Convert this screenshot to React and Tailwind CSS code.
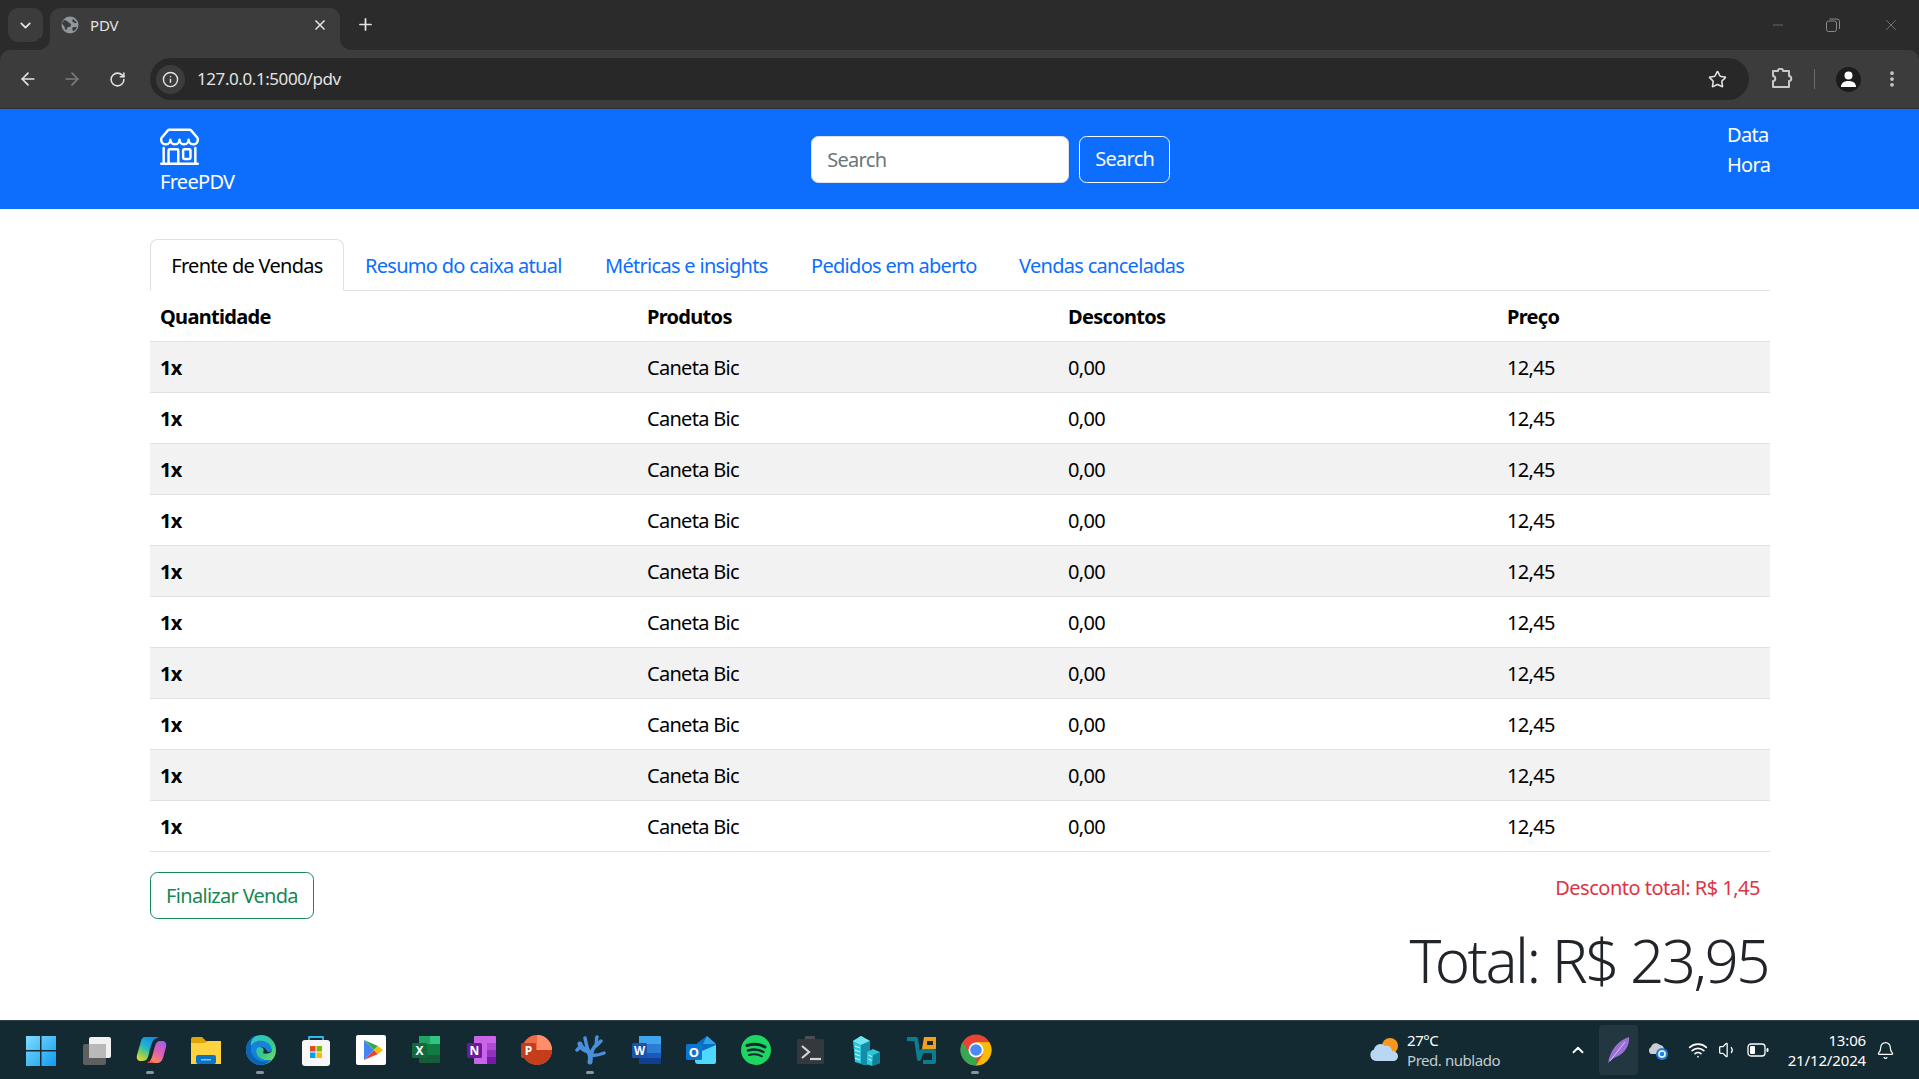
import React from "react";
import { BsShop } from "react-icons/bs";
import { ArrowLeft, ArrowRight, RotateCw, Info, Star, ChevronDown, ChevronUp, X, Plus, Minus, EllipsisVertical, Bell, Wifi, Volume1 } from "lucide-react";

const rows = Array.from({ length: 10 });

const Icon = ({ dot, children }) => (
  <div className="relative flex h-full w-[55px] shrink-0 items-center justify-center">
    <svg width="32" height="32" viewBox="0 0 32 32">{children}</svg>
    {dot && <span className="absolute bottom-[5px] left-[23px] h-[3px] w-[8px] rounded-full bg-[#8b9599]" />}
  </div>
);

function Taskbar() {
  return (
    <footer className="flex h-[59px] shrink-0 items-center border-t border-[#2c3e45] bg-[#132a32] text-white">
      <div className="ml-[13px] flex h-full items-center">
        <Icon>
          <defs><linearGradient id="w" x1="0" y1="0" x2="1" y2="1"><stop offset="0" stopColor="#7fdcff" /><stop offset="1" stopColor="#109bf0" /></linearGradient></defs>
          <path fill="url(#w)" d="M1 2h14v14H1zM16.500 2H31v14H16.500zM1 17.500h14V32H1zM16.500 17.500H31V32H16.500z" />
        </Icon>
        <Icon>
          <rect x="3" y="10" width="23" height="21" rx="2" fill="#5f5f5f" />
          <rect x="9" y="3" width="22" height="21" rx="2" fill="#f1f1f1" />
          <rect x="9" y="10" width="17" height="14" fill="#b9b9b9" />
        </Icon>
        <Icon dot>
          <defs>
            <linearGradient id="c1" x1="0.7" y1="0" x2="0.1" y2="1"><stop offset="0" stopColor="#1686e8" /><stop offset=".45" stopColor="#22b8c8" /><stop offset=".75" stopColor="#8fd14f" /><stop offset="1" stopColor="#f6d33c" /></linearGradient>
            <linearGradient id="c2" x1="0.8" y1="0" x2="0.2" y2="1"><stop offset="0" stopColor="#a35ce8" /><stop offset=".5" stopColor="#e25fb0" /><stop offset=".85" stopColor="#f58a5a" /><stop offset="1" stopColor="#e8483a" /></linearGradient>
          </defs>
          <path fill="url(#c1)" d="M10 3h11c1 0 2 0 3 1-4 0-6 2-7 5l-4 14c-1 3-3 4-6 4H6c-3 0-5-2-4-6L6 7c1-3 2-4 4-4z" />
          <path fill="url(#c2)" d="M12 29h10c3 0 5-2 6-5l3-11c1-4-1-6-4-6h-2c-3 0-4 2-5 5l-3 11c-1 3-3 5-5 6z" />
          <path fill="#132a32" opacity=".35" d="M14 16l3-7 1 9-3 5z" />
        </Icon>
        <Icon>
          <path fill="#e0a30a" d="M1 5a2 2 0 0 1 2-2h9l4 4h14v8H1z" />
          <path fill="#fdd33f" d="M1 9h14l3-2h13v23H1z" />
          <rect x="6" y="21" width="20" height="9" rx="2" fill="#0c74c4" />
          <rect x="11" y="25" width="10" height="1.500" fill="#7fc3f2" />
        </Icon>
        <Icon dot>
          <defs><linearGradient id="e" x1="0" y1="0" x2="1" y2="1"><stop offset="0" stopColor="#2fc1de" /><stop offset=".6" stopColor="#35c98b" /><stop offset="1" stopColor="#8ee05a" /></linearGradient></defs>
          <circle cx="16" cy="16" r="15" fill="url(#e)" />
          <path fill="#0c63b8" d="M1 16C1 7 8 1 16 1c-7 0-11 5-10 11 1 9 10 16 20 14a15 15 0 0 1-10 5C7 31 1 24 1 16z" />
          <path fill="#1483d8" d="M6 12c2-4 7-6 12-5 5 1 8 4 9 9-1 4-6 4-9 3 2-3 0-6-3-6-4 0-5 5-2 9 2 3 7 5 13 4-9 5-22-2-20-14z" />
          <path fill="#132a32" d="M15 13c3 0 5 3 3 6 3 1 8 1 9-3 0 0-1 2-3 2-3 0-3-6-9-5z" />
        </Icon>
        <Icon>
          <path fill="none" stroke="#2bb7f0" strokeWidth="1.800" d="M9 9V3h14v6" />
          <rect x="2" y="6" width="28" height="26" rx="3" fill="#f7f7f7" />
          <path fill="#e8482a" d="M10 12h5.500v5.500H10z" /><path fill="#7fb900" d="M16.500 12H22v5.500h-5.500z" />
          <path fill="#00a2ed" d="M10 18.500h5.500V24H10z" /><path fill="#ffb900" d="M16.500 18.500H22V24h-5.500z" />
        </Icon>
        <Icon>
          <rect x="1" y="1" width="30" height="30" rx="2" fill="#fff" />
          <path fill="#4285f4" d="M9 6v20l10-10z" />
          <path fill="#34a853" d="M9 6l10 10 4-4z" />
          <path fill="#ea4335" d="M9 26l10-10 4 4z" />
          <path fill="#fbbc04" d="M23 12l-4 4 4 4 5-4z" />
        </Icon>
        <Icon>
          <path fill="#21a366" d="M9 2h20a1 1 0 0 1 1 1v7H9z" /><path fill="#33c481" d="M20 2h9a1 1 0 0 1 1 1v7H20z" />
          <rect x="9" y="10" width="21" height="11" fill="#107c41" />
          <path fill="#185c37" d="M9 21h21v7a1 1 0 0 1-1 1H10a1 1 0 0 1-1-1z" />
          <rect x="2" y="9" width="15" height="15" rx="1.500" fill="#0f6b3c" />
          <text x="9.500" y="21" textAnchor="middle" fontFamily="Noto Sans" fontWeight="700" fontSize="12" fill="#fff">X</text>
        </Icon>
        <Icon>
          <rect x="9" y="2" width="22" height="28" rx="1" fill="#ca64ea" />
          <rect x="22" y="9" width="9" height="7" fill="#ae4bd5" /><rect x="22" y="16" width="9" height="7" fill="#9332bf" /><rect x="22" y="23" width="9" height="7" fill="#7719aa" />
          <rect x="2" y="9" width="15" height="15" rx="1.500" fill="#6b1b9a" />
          <text x="9.500" y="21" textAnchor="middle" fontFamily="Noto Sans" fontWeight="700" fontSize="12" fill="#fff">N</text>
        </Icon>
        <Icon>
          <circle cx="17" cy="16" r="15" fill="#ed6c47" />
          <path fill="#ff8f6b" d="M17 1a15 15 0 0 1 15 15H17z" />
          <path fill="#c43e1c" d="M2 16h30a15 15 0 0 1-30 0z" />
          <rect x="1" y="9" width="15" height="15" rx="1.500" fill="#c43e1c" />
          <text x="8.500" y="21" textAnchor="middle" fontFamily="Noto Sans" fontWeight="700" fontSize="12" fill="#fff">P</text>
        </Icon>
        <Icon dot>
          <g fill="none" stroke="#4b8fdc" strokeLinecap="round" strokeLinejoin="round">
            <path strokeWidth="5" d="M15 28c1-5 1-8-2-11-3-1-7-2-8-7" />
            <path strokeWidth="3.500" d="M5 13l-3 3M13 17c-1-4-2-8-3-13M16 21c1-5 3-8 5-10 1-3 0-6 1-8M21 12l5-5M17 21c3 1 7 0 12-2" />
          </g>
        </Icon>
        <Icon>
          <path fill="#41a5ee" d="M9 2h21a1 1 0 0 1 1 1v7H9z" /><rect x="9" y="10" width="22" height="9" fill="#2b7cd3" />
          <rect x="9" y="19" width="22" height="5" fill="#185abd" /><path fill="#103f91" d="M9 24h22v5a1 1 0 0 1-1 1H10a1 1 0 0 1-1-1z" />
          <rect x="2" y="9" width="15" height="15" rx="1.500" fill="#1a52ad" />
          <text x="9.500" y="21" textAnchor="middle" fontFamily="Noto Sans" fontWeight="700" fontSize="11.500" fill="#fff">W</text>
        </Icon>
        <Icon>
          <path fill="#0a6fc4" d="M12 9l10-7 9 8v10H12z" />
          <path fill="#28a8ea" d="M22 2l9 8H18z" />
          <path fill="#50d9ff" d="M10 20l21-9v17a2 2 0 0 1-2 2H13a3 3 0 0 1-3-3z" />
          <rect x="1" y="10" width="16" height="16" rx="1.500" fill="#0b76d0" />
          <text x="9" y="23" textAnchor="middle" fontFamily="Noto Sans" fontWeight="700" fontSize="13" fill="#fff">O</text>
        </Icon>
        <Icon>
          <circle cx="16" cy="16" r="15" fill="#1ed760" />
          <g fill="none" stroke="#132a32" strokeLinecap="round">
            <path strokeWidth="3" d="M7 11.500c6-1.800 13-1.300 18 1.500" />
            <path strokeWidth="2.500" d="M8 16.500c5-1.400 11-1 15.500 1.500" />
            <path strokeWidth="2" d="M9 21c4-1 9-.8 13 1.300" />
          </g>
        </Icon>
        <Icon>
          <rect x="10" y="2" width="10" height="5" rx="1" fill="#4a4f54" />
          <rect x="2" y="5" width="27" height="25" rx="1.500" fill="#33393e" />
          <path fill="none" stroke="#d4d4d4" strokeWidth="2.200" d="M7 12l7 6-7 6" />
          <path stroke="#d4d4d4" strokeWidth="2.200" d="M15 25h11" />
        </Icon>
        <Icon>
          <path fill="#2bc7dc" d="M3 7l8-5 9 5v23l-5 1-10-3z" />
          <path fill="#6fe6f2" d="M3 7l8-5 9 5-9 4z" />
          <path fill="#138ea6" d="M11 11l9-4v23l-5 1-4-1z" />
          <path fill="#2bc7dc" d="M17 18l6-3 7 3v11l-8 3-5-2z" />
          <path fill="#0f8199" d="M23 21l7-3v11l-8 3z" />
          <path stroke="#e7fbff" strokeWidth="1" d="M5 12l5 2M5 16l5 2M5 20l5 2M5 24l5 2M18.500 21l3 1.500M18.500 25l3 1.500" />
        </Icon>
        <Icon>
          <path fill="none" stroke="#0e7c8f" strokeWidth="4" strokeLinejoin="round" d="M2 5h9l3 20 3-8h12v11H18" />
          <path fill="#f0a020" d="M19 3h12v12H17z" />
          <rect x="22" y="7" width="6" height="4" fill="#132a32" />
        </Icon>
        <Icon dot>
          <circle cx="16" cy="16" r="15.500" fill="#ea4335" />
          <path fill="#34a853" d="M16 31.500A15.500 15.500 0 0 1 2.600 8.200L10 20l6 0 1 11.500z" />
          <path fill="#fbbc04" d="M16 31.500A15.500 15.500 0 0 0 29.400 8.200L16 8l7 12z" />
          <circle cx="16" cy="16" r="7.500" fill="#fff" />
          <circle cx="16" cy="16" r="5.800" fill="#4a8af4" />
        </Icon>
      </div>

      <div className="ml-[365px] flex items-center">
        <svg width="32" height="26" viewBox="0 0 32 26">
          <circle cx="22" cy="9" r="8" fill="#f59a1e" />
          <path fill="#b9d6f2" d="M8 24a6 6 0 0 1-2-11.500C7 7 14 5 17 9c3-1 7 1 7 5 3 0 6 2 6 5s-2 5-5 5z" />
        </svg>
        <div className="ml-[7px] w-[130px] whitespace-nowrap text-[15px] leading-[20px] tracking-[-0.03em]">
          <div>27°C</div>
          <div className="text-[#c4cbce]">Pred. nublado</div>
        </div>
      </div>
      <ChevronUp size={18} strokeWidth={2.500} className="ml-[32px]" />
      <div className="ml-[12px] flex h-[50px] w-[39px] items-center justify-center rounded bg-[#22373f]">
        <svg width="24" height="28" viewBox="0 0 24 28">
          <path fill="#9a6fd6" d="M1 27C3 15 10 5 22 1c1 9-5 17-13 20-3 1-5 3-8 6z" />
          <path stroke="#d7c2f4" strokeWidth="1" d="M3 25L18 6" />
        </svg>
      </div>
      <svg width="22" height="20" viewBox="0 0 22 20" className="ml-[9px]">
        <path fill="#c9ced0" d="M4 14a4 4 0 0 1 0-7c1-4 6-5 9-2 2 0 4 2 4 4v5z" />
        <circle cx="15" cy="14" r="6" fill="#1f7fe0" />
        <circle cx="15" cy="14" r="3" fill="none" stroke="#fff" strokeWidth="1.500" />
      </svg>
      <Wifi size={20} strokeWidth={2} className="ml-[19px]" />
      <Volume1 size={20} strokeWidth={1.500} className="ml-[10px]" />
      <svg width="22" height="14" viewBox="0 0 22 14" className="ml-[9px]">
        <rect x="1" y="1" width="17" height="12" rx="3" fill="none" stroke="#fff" strokeWidth="1.300" />
        <rect x="3" y="3" width="5" height="8" rx="1" fill="#fff" />
        <rect x="19.500" y="5" width="2" height="4" rx="1" fill="#fff" />
      </svg>
      <div className="ml-auto text-right text-[15px] leading-[20px] tracking-[-0.01em]">
        <div>13:06</div>
        <div>21/12/2024</div>
      </div>
      <Bell size={19} strokeWidth={1.500} className="ml-[10px] mr-[24px]" />
    </footer>
  );
}

function BrowserChrome() {
  return (
    <header className="shrink-0 bg-[#2b2b2b] text-[#e3e3e3]">
      <div className="flex h-[50px] items-end pl-[8px]">
        <div className="mb-[8px] flex h-[34px] w-[35px] items-center justify-center rounded-[10px] bg-[#3c3c3c]">
          <ChevronDown size={17} strokeWidth={2.500} />
        </div>
        <div className="relative ml-[7px] flex h-[42px] w-[290px] items-center rounded-t-[10px] bg-[#3c3c3c] pb-[8px] pl-[11px] pr-[12px]">
          <span className="absolute bottom-0 -left-[12px] h-[12px] w-[12px] bg-[#3c3c3c]">
            <span className="block h-full w-full rounded-br-[12px] bg-[#2b2b2b]" />
          </span>
          <span className="absolute bottom-0 -right-[12px] h-[12px] w-[12px] bg-[#3c3c3c]">
            <span className="block h-full w-full rounded-bl-[12px] bg-[#2b2b2b]" />
          </span>
          <svg width="18" height="18" viewBox="0 0 18 18">
            <circle cx="9" cy="9" r="8.500" fill="#8f969c" />
            <path fill="#3c3c3c" d="M3 4c2 0 3 1 4 2s3 1 3 3-2 2-3 2-1 3-2 3-1-3-2-4-2-2-2-3zM12 3c1 1 3 2 4 4-2 0-3 0-4-1s-1-2 0-3zM12 11c1 0 3 0 4 0-1 2-2 4-4 4-1-1-1-3 0-4z" />
          </svg>
          <span className="ml-[11px] text-[15px] tracking-[-0.01em]">PDV</span>
          <X size={16} strokeWidth={2.500} className="ml-auto" />
        </div>
        <Plus size={19} strokeWidth={2.200} className="mb-[16px] ml-[16px]" />
        <div className="mb-[16px] ml-auto flex items-center text-[#8a8a8a]">
          <Minus size={16} strokeWidth={1} className="mr-[40px]" />
          <svg width="14" height="14" viewBox="0 0 14 14" className="mr-[42px]" fill="none" stroke="#8a8a8a" strokeWidth="1">
            <rect x=".5" y="3" width="10" height="10.500" rx="2" />
            <path d="M3.500 1h7.500a2.500 2.500 0 0 1 2.500 2.500V11" />
          </svg>
          <X size={18} strokeWidth={1} className="mr-[19px]" />
        </div>
      </div>
      <div className="flex h-[59px] items-center rounded-t-[10px] border-b border-[#2f2f2f] bg-[#3c3c3c] pr-[17px]">
        <ArrowLeft size={20} strokeWidth={2} className="ml-[18px]" />
        <ArrowRight size={20} strokeWidth={2} className="ml-[24px] text-[#7d7d7d]" />
        <RotateCw size={17} strokeWidth={2.200} className="ml-[27px]" />
        <div className="ml-[24px] flex h-[42px] flex-1 items-center rounded-full bg-[#282828] pl-[6px]">
          <span className="flex h-[29px] w-[29px] items-center justify-center rounded-full bg-[#3c3c3c]">
            <Info size={17} strokeWidth={2} />
          </span>
          <span className="ml-[12px] text-[17px] tracking-[-0.025em]">127.0.0.1:5000/pdv</span>
          <Star size={19} strokeWidth={2} className="ml-auto mr-[22px]" />
        </div>
        <svg width="22" height="22" viewBox="0 0 22 22" className="ml-[22px]" fill="none" stroke="#c8c8c8" strokeWidth="2">
          <path d="M2 4h5c0-3 5-3 5 0h6v5c3 0 3 5 0 5v6H2v-6c3 0 3-5 0-5V4z" strokeLinejoin="round" transform="translate(0 -1)" />
        </svg>
        <span className="ml-[21px] h-[20px] w-[1px] bg-[#6a6a6a]" />
        <span className="ml-[21px] flex h-[25px] w-[25px] items-center justify-center rounded-full bg-[#1b1b1b]">
          <svg width="17" height="16" viewBox="0 0 17 16" fill="#fff">
            <circle cx="8.500" cy="4.500" r="4" />
            <path d="M1 16c0-4 3-6 7.500-6S16 12 16 16z" />
          </svg>
        </span>
        <EllipsisVertical size={20} strokeWidth={2.500} className="ml-[21px] text-[#c8c8c8]" />
      </div>
    </header>
  );
}

export default function App() {
  return (
    <div className="flex h-[1079px] w-full flex-col overflow-hidden bg-white font-['Noto_Sans',sans-serif] text-[#212529]">
      <BrowserChrome />
      <nav className="flex h-[100px] shrink-0 items-center justify-between bg-[#0d6efd] pl-[160px] pr-[149px] text-[20px] leading-[30px] text-white tracking-[-0.035em]">
        <a className="flex flex-col items-start">
          <BsShop size={39} className="mt-[5px]" />
          <span className="mt-[2px]">FreePDV</span>
        </a>
        <form className="ml-[20px] flex items-center gap-[10px]">
          <input
            placeholder="Search"
            className="h-[47px] w-[258px] rounded-[7.500px] border border-[#dee2e6] bg-white px-[15px] text-[20px] text-[#212529] outline-none placeholder:text-[#6c757d]"
          />
          <button type="button" className="h-[47px] w-[91px] rounded-[7.500px] border border-[#f8f9fa] text-[20px] text-[#f8f9fa]">
            Search
          </button>
        </form>
        <div className="mb-[18px] w-[43px] whitespace-nowrap">
          <div>Data</div>
          <div>Hora</div>
        </div>
      </nav>

      <main className="min-h-0 flex-1 pl-[150px] pr-[149px] pt-[30px] text-[20px] leading-[30px] tracking-[-0.035em]">
        <ul className="flex h-[52px] border-b border-[#dee2e6] text-[#0d6efd]">
          <li className="h-[52px] w-[194px] whitespace-nowrap rounded-t-[7.500px] border border-[#dee2e6] border-b-white bg-white px-[20px] py-[11px] text-center text-black">Frente de Vendas</li>
          <li className="w-[240px] whitespace-nowrap px-[21px] py-[12px]">Resumo do caixa atual</li>
          <li className="w-[206px] whitespace-nowrap px-[21px] py-[12px]">Métricas e insights</li>
          <li className="w-[208px] whitespace-nowrap px-[21px] py-[12px]">Pedidos em aberto</li>
          <li className="whitespace-nowrap px-[21px] py-[12px]">Vendas canceladas</li>
        </ul>
        <table className="w-full table-fixed border-separate border-spacing-0 text-black">
          <thead>
            <tr className="text-left">
              <th className="h-[51px] w-[487px] border-b border-[#dee2e6] px-[10px] pt-[2px] font-bold">Quantidade</th>
              <th className="w-[421px] border-b border-[#dee2e6] px-[10px] pt-[2px] font-bold">Produtos</th>
              <th className="w-[439px] border-b border-[#dee2e6] px-[10px] pt-[2px] font-bold">Descontos</th>
              <th className="border-b border-[#dee2e6] px-[10px] pt-[2px] font-bold">Preço</th>
            </tr>
          </thead>
          <tbody>
            {rows.map((_, i) => (
              <tr key={i} className={i % 2 === 0 ? "bg-[#f2f2f2]" : "bg-white"}>
                <td className="h-[51px] border-b border-[#dee2e6] px-[10px] pt-[2px] font-bold">1x</td>
                <td className="border-b border-[#dee2e6] px-[10px] pt-[2px]">Caneta Bic</td>
                <td className="border-b border-[#dee2e6] px-[10px] pt-[2px]">0,00</td>
                <td className="border-b border-[#dee2e6] px-[10px] pt-[2px]">12,45</td>
              </tr>
            ))}
          </tbody>
        </table>
        <div className="mt-[20px] flex items-start justify-between">
          <button type="button" className="h-[47px] w-[164px] rounded-[7.500px] border border-[#198754] text-[#198754]">
            Finalizar Venda
          </button>
          <div className="pr-[10px] pt-[1px] tracking-[-0.025em] text-[#dc3545]">Desconto total: R$ 1,45</div>
        </div>
        <div className="mt-[5px] pr-[2px] text-right text-[60px] font-light leading-[72px] tracking-[-0.042em]">Total: R$ 23,95</div>
      </main>
      <Taskbar />
    </div>
  );
}
